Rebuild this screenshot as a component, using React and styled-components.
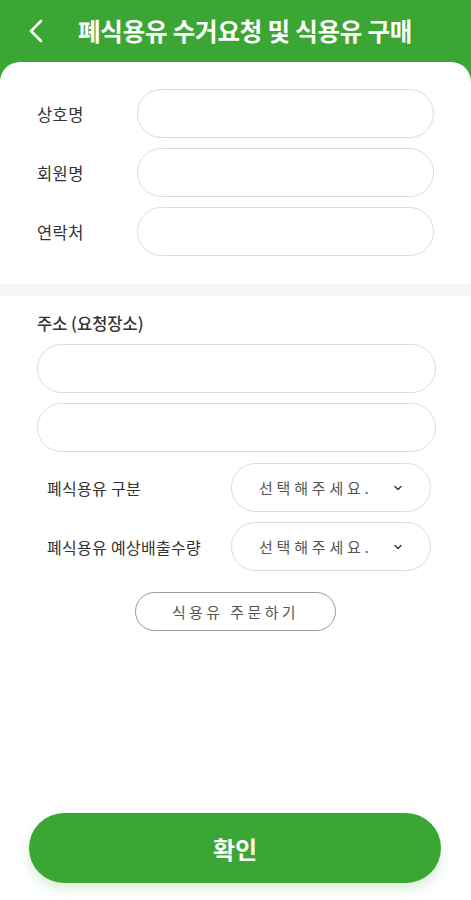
import React from "react";
import styled, { createGlobalStyle } from "styled-components";

const GlobalStyle = createGlobalStyle`
    * {
        box-sizing: border-box;
    }
    body {
        margin: 0;
        font-family: "Noto Sans CJK KR", "Noto Sans", sans-serif;
        background: #fff;
    }
`;

const Page = styled.div`
    min-height: 900px;
    display: flex;
    flex-direction: column;
    background-color: #3ca635;
`;

const Header = styled.div`
    height: 62px;
    display: flex;
    align-items: center;
    padding-left: 29px;
    color: #fff;
`;

const BackButton = styled.button`
    border: none;
    background: none;
    padding: 0;
    width: 14px;
    height: 24px;
    display: flex;
    cursor: pointer;
`;

const Title = styled.h1`
    margin: 0 0 0 35px;
    font-size: 24.5px;
    font-weight: 700;
    letter-spacing: -0.2px;
    line-height: 1;
`;

const Card = styled.div`
    flex: 1;
    display: flex;
    flex-direction: column;
    background: #fff;
    border-radius: 20px 20px 0 0;
`;

const InfoSection = styled.div`
    padding: 27px 37px 28px 37px;
    display: flex;
    flex-direction: column;
    gap: 10px;
`;

const InfoRow = styled.div`
    display: grid;
    grid-template-columns: 100px 1fr;
    align-items: center;
`;

const Label = styled.label`
    font-size: 16.5px;
    letter-spacing: 0.4px;
    color: #333;
`;

const Divider = styled.div`
    height: 12px;
    background-color: #f6f6f6;
`;

const AddressSection = styled.div`
    padding: 16px 35px 0 37px;
    display: flex;
    flex-direction: column;
`;

const SectionLabel = styled.div`
    font-size: 16.5px;
    font-weight: 500;
    color: #333;
    line-height: 22px;
    margin-bottom: 10px;
`;

const Input = styled.input`
    width: 100%;
    height: 49px;
    border: 1px solid #dcdcdc;
    border-radius: 25px;
    padding: 0 20px;
    font-size: 15px;
    font-family: inherit;
    outline: none;
    background: #fff;
`;

const InputStack = styled.div`
    display: flex;
    flex-direction: column;
    gap: 10px;
`;

const SelectList = styled.div`
    margin-top: 11px;
    padding: 0 5px 0 10px;
    display: flex;
    flex-direction: column;
    gap: 10px;
`;

const SelectRow = styled.div`
    display: flex;
    align-items: center;
    justify-content: space-between;
`;

const SelectLabel = styled.span`
    font-size: 16px;
    color: #333;
    letter-spacing: 0.3px;
`;

const SelectBox = styled.div`
    width: 200px;
    height: 49px;
    border: 1px solid #dcdcdc;
    border-radius: 25px;
    display: flex;
    align-items: center;
    justify-content: space-between;
    padding: 0 28px 0 27px;
    color: #555;
    font-size: 15px;
    letter-spacing: 3.8px;
`;

const OrderButton = styled.button`
    align-self: center;
    margin: 21px 0 0 -2px;
    width: 201px;
    height: 39px;
    border: 1px solid #999;
    border-radius: 20px;
    background: #fff;
    color: #555;
    font-family: inherit;
    font-size: 15px;
    letter-spacing: 3.4px;
    cursor: pointer;
`;

const Footer = styled.div`
    margin-top: auto;
    padding: 0 30px 17px 29px;
`;

const ConfirmButton = styled.button`
    width: 100%;
    height: 70px;
    border: none;
    border-radius: 35px;
    background-color: #3ca635;
    color: #fff;
    font-family: inherit;
    font-size: 24px;
    font-weight: 700;
    box-shadow: 0 6px 12px rgba(60, 166, 53, 0.2);
    cursor: pointer;
`;

const ChevronLeft = () => (
    <svg width="14" height="24" viewBox="0 0 14 24" fill="none">
        <polyline points="12,2 2,12 12,22" stroke="#fff" strokeWidth="2.6" strokeLinecap="round" strokeLinejoin="round" />
    </svg>
);

const ChevronDown = () => (
    <svg width="8" height="6" viewBox="0 0 8 6" fill="none">
        <polyline points="1,1.5 4,4.5 7,1.5" stroke="#444" strokeWidth="1.6" strokeLinecap="round" strokeLinejoin="round" />
    </svg>
);

const infoFields = ["상호명", "회원명", "연락처"];
const selectFields = ["폐식용유 구분", "폐식용유 예상배출수량"];

const App = () => {
    return (
        <>
            <GlobalStyle />
            <Page>
                <Header>
                    <BackButton type="button"><ChevronLeft /></BackButton>
                    <Title>폐식용유 수거요청 및 식용유 구매</Title>
                </Header>
                <Card>
                    <InfoSection>
                        {infoFields.map((name) => (
                            <InfoRow key={name}>
                                <Label>{name}</Label>
                                <Input type="text" />
                            </InfoRow>
                        ))}
                    </InfoSection>
                    <Divider />
                    <AddressSection>
                        <SectionLabel>주소 (요청장소)</SectionLabel>
                        <InputStack>
                            <Input type="text" />
                            <Input type="text" />
                        </InputStack>
                        <SelectList>
                            {selectFields.map((name) => (
                                <SelectRow key={name}>
                                    <SelectLabel>{name}</SelectLabel>
                                    <SelectBox>
                                        <span>선택해주세요.</span>
                                        <ChevronDown />
                                    </SelectBox>
                                </SelectRow>
                            ))}
                        </SelectList>
                        <OrderButton type="button">식용유 주문하기</OrderButton>
                    </AddressSection>
                    <Footer>
                        <ConfirmButton type="button">확인</ConfirmButton>
                    </Footer>
                </Card>
            </Page>
        </>
    );
};

export default App;
